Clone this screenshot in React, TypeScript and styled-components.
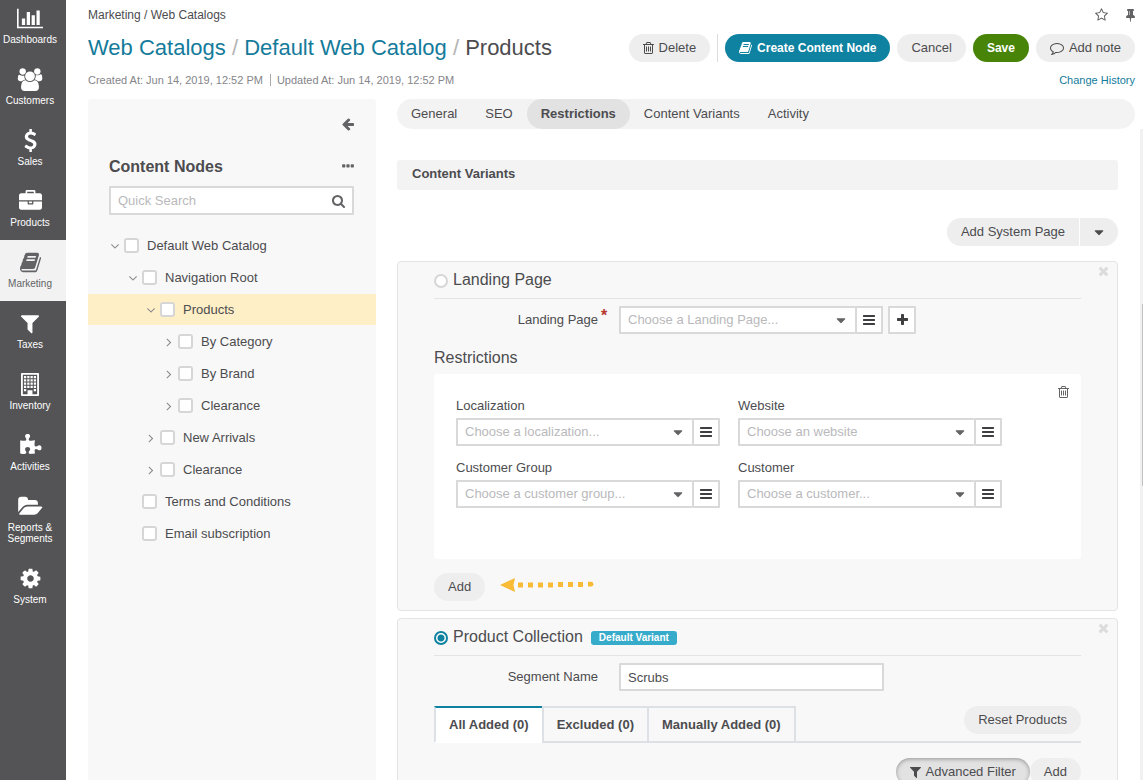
import React from "react";
import styled, { createGlobalStyle, css } from "styled-components";

const GlobalStyle = createGlobalStyle`
  *, *::before, *::after { box-sizing: border-box; }
  body {
    margin: 0;
    background: #fff;
    color: #4c4c4f;
    font-family: "Liberation Sans", Arial, sans-serif;
    font-size: 13px;
    line-height: 18px;
  }
  button, input, select { font: inherit; color: inherit; margin: 0; }
  h1, h2, h3, ul, p { margin: 0; padding: 0; font-weight: normal; }
  ul { list-style: none; }
  a { color: #147b9b; text-decoration: none; }
`;

/* ---------- icons ---------- */

/* w is the glyph's advance width and x its left edge, in 1792-unit ems */
const icons: Record<string, { w: number; x?: number; d: string }> = {
  chart: { w: 2048, d: "M640 896v512h-256v-512h256zm384-512v1024h-256v-1024h256zm1024 1152v128h-2048v-1536h128v1408h1920zm-640-896v768h-256v-768h256zm384-384v1152h-256v-1152h256z" },
  users: { w: 2048, d: "M657 896q-162 5-265 128h-134q-82 0-138-40.5t-56-118.5q0-353 124-353 6 0 43.5 21t97.5 42.5 119 21.5q67 0 133-23-5 37-5 66 0 159 90 290zm1071 637q0 120-73 189.5t-194 69.5h-874q-121 0-194-69.5t-73-189.5q0-53 3.5-103.5t14-109 26.5-108.5 43-97.5 62-81 85.5-53.5 111.5-20q10 0 43 21.5t73 48 107 48 135 21.5 135-21.5 107-48 73-48 43-21.5q61 0 111.5 20t85.5 53.5 62 81 43 97.5 26.5 108.5 14 109 3.5 103.5zm-1024-1277q0 106-75 181t-181 75-181-75-75-181 75-181 181-75 181 75 75 181zm704 384q0 159-112.5 271.5t-271.5 112.5-271.5-112.5-112.5-271.5 112.5-271.5 271.5-112.5 271.5 112.5 112.5 271.5zm576 225q0 78-56 118.5t-138 40.5h-134q-103-123-265-128 90-131 90-290 0-29-5-66 66 23 133 23 59 0 119-21.5t97.5-42.5 43.5-21q124 0 124 353zm-128-609q0 106-75 181t-181 75-181-75-75-181 75-181 181-75 181 75 75 181z" },
  dollar: { w: 1792, d: "M1362 1185q0 153-99.5 263.5t-258.5 136.5v175q0 14-9 23t-23 9h-135q-13 0-22.5-9.5t-9.5-22.5v-175q-66-9-127.5-31t-101.5-44.5-74-48-46.5-37.5-17.5-18q-17-21-2-41l103-135q7-10 23-12 15-2 24 9l2 2q113 99 243 125 37 8 74 8 81 0 142.5-43t61.5-122q0-28-15-53t-33.5-42-58.5-37.5-66-32-80-32.5q-39-16-61.5-25t-61.5-26.5-62.5-31-56.5-35.5-53.5-42.5-43.5-49-35.5-58-21-66.5-8.5-78q0-138 98-242t255-134v-180q0-13 9.5-22.5t22.5-9.5h135q14 0 23 9t9 23v176q57 6 110.5 23t87 33.5 63.5 37.5 39 29 15 14q17 18 5 38l-81 146q-8 15-23 16-14 3-27-7-3-3-14.5-12t-39-26.5-58.5-32-74.5-26-85.5-11.5q-95 0-155 43t-60 111q0 26 8.5 48t29.5 41.5 39.5 33 56 31 60.5 27 70 27.5q53 20 81 31.5t76 35 75.5 42.5 62 50 53 63.5 31.5 76.5 13 94z" },
  briefcase: { w: 1792, d: "M640 256h512v-128h-512v128zm1152 640v480q0 66-47 113t-113 47h-1472q-66 0-113-47t-47-113v-480h672v160q0 26 19 45t45 19h320q26 0 45-19t19-45v-160h672zm-768 0v128h-256v-128h256zm768-480v384h-1792v-384q0-66 47-113t113-47h352v-160q0-40 28-68t68-28h576q40 0 68 28t28 68v160h352q66 0 113 47t47 113z" },
  book: { w: 1664, x: 64, d: "M1703 478q40 57 18 129l-275 906q-19 64-76.5 107.5t-122.5 43.5h-923q-77 0-148.5-53.5t-99.5-131.5q-24-67-2-127 0-4 3-27t4-37q1-8-3-21.5t-3-19.5q2-11 8-21t16.5-23.5 16.5-23.5q23-38 45-91.5t30-91.5q3-10 .5-30t-.5-28q3-11 17-28t17-23q21-36 42-92t25-90q1-9-2.5-32t.5-28q4-13 22-30.5t22-22.5q19-26 42.5-84.5t27.5-96.5q1-8-3-25.5t-2-26.5q2-8 9-18t18-23 17-21q8-12 16.5-30.5t15-35 16-36 19.5-32 26.5-23.5 36-11.5 47.5 5.5l-1 3q38-9 51-9h761q74 0 114 56t18 130l-274 906q-36 119-71.5 153.5t-128.5 34.5h-869q-27 0-38 15-11 16-1 43 24 70 144 70h923q29 0 56-15.5t35-41.5l300-987q7-22 5-57 38 15 59 43zm-1064 2q-4 13 2 22.5t20 9.5h608q13 0 25.5-9.5t16.5-22.5l21-64q4-13-2-22.5t-20-9.5h-608q-13 0-25.5 9.5t-16.5 22.5zm-83 256q-4 13 2 22.5t20 9.5h608q13 0 25.5-9.5t16.5-22.5l21-64q4-13-2-22.5t-20-9.5h-608q-13 0-25.5 9.5t-16.5 22.5z" },
  filter: { w: 1408, x: 192, d: "M1595 295q17 41-14 70l-493 493v742q0 42-39 59-13 5-25 5-27 0-45-19l-256-256q-19-19-19-45v-486l-493-493q-31-29-14-70 17-39 59-39h1280q42 0 59 39z" },
  building: { w: 1408, d: "M64 0h1280q64 0 64 64v1664q0 64-64 64h-1280q-64 0-64-64v-1664q0-64 64-64zM144 128v1536h1120v-1536zM232 232h176v176h-176zM488 232h176v176h-176zM744 232h176v176h-176zM1000 232h176v176h-176zM232 488h176v176h-176zM488 488h176v176h-176zM744 488h176v176h-176zM1000 488h176v176h-176zM232 744h176v176h-176zM488 744h176v176h-176zM744 744h176v176h-176zM1000 744h176v176h-176zM232 1000h176v176h-176zM488 1000h176v176h-176zM744 1000h176v176h-176zM1000 1000h176v176h-176zM232 1256h176v176h-176zM1000 1256h176v176h-176zM512 1344h384v320h-384z" },
  puzzle: { w: 1792, d: "M1755 1083q0 81-44.5 135t-123.5 54q-41 0-77.5-17.5t-59-38-56.5-38-71-17.5q-110 0-110 124 0 39 16 115t15 115v5q-22 0-33 1-34 3-97.5 11.5t-115.5 13.5-98 5q-61 0-103-26.5t-42-83.5q0-37 17.5-71t38-56.5 38-59 17.5-77.5q0-79-54-123.5t-135-44.5q-84 0-143 45.5t-59 127.5q0 43 15 83t33.5 64.5 33.5 53 15 50.5q0 45-46 89-37 35-117 35-95 0-245-24-9-2-27.5-4t-27.5-4l-13-2q-1 0-3-1-2 0-2-1v-1024q2 1 17.5 3.5t34 5 21.5 3.5q150 24 245 24 80 0 117-35 46-44 46-89 0-22-15-50.5t-33.5-53-33.5-64.5-15-83q0-82 59-127.5t144-45.5q80 0 134 44.5t54 123.5q0 41-17.5 77.5t-38 59-38 56.5-17.5 71q0 57 42 83.5t103 26.5q64 0 180-15t163-17v2q-1 2-3.5 17.5t-5 34-3.5 21.5q-24 150-24 245 0 80 35 117 44 46 89 46 22 0 50.5-15t53-33.5 64.5-33.5 83-15q82 0 127.5 59t45.5 143z" },
  folder: { w: 1920, d: "M1879 952q0 31-31 66l-336 396q-43 51-120.5 86.5t-143.5 35.5h-1088q-34 0-60.5-13t-26.5-43q0-31 31-66l336-396q43-51 120.5-86.5t143.5-35.5h1088q34 0 60.5 13t26.5 43zm-343-344v160h-832q-94 0-197 47.5t-164 119.5l-337 396-5 6q0-4-.5-12.5t-.5-12.5v-960q0-92 66-158t158-66h320q92 0 158 66t66 158v32h544q92 0 158 66t66 158z" },
  cog: { w: 1792, d: "M1152 896q0-106-75-181t-181-75-181 75-75 181 75 181 181 75 181-75 75-181zm512-109v222q0 12-8 23t-20 13l-185 28q-19 54-39 91 35 50 107 138 10 12 10 25t-9 23q-27 37-99 108t-94 71q-12 0-26-9l-138-108q-44 23-91 38-16 136-29 186-7 28-36 28h-222q-14 0-24.5-8.5t-11.5-21.5l-28-184q-49-16-90-37l-141 107q-10 9-25 9-14 0-25-11-126-114-165-168-7-10-7-23 0-12 8-23 15-21 51-66.5t54-70.5q-27-50-41-99l-183-27q-13-2-21-12.5t-8-23.5v-222q0-12 8-23t19-13l186-28q14-46 39-92-40-57-107-138-10-12-10-24 0-10 9-23 26-36 98.5-107.5t94.5-71.5q13 0 26 10l138 107q44-23 91-38 16-136 29-186 7-28 36-28h222q14 0 24.5 8.5t11.5 21.5l28 184q49 16 90 37l142-107q9-9 24-9 13 0 25 10 129 119 165 170 7 8 7 22 0 12-8 23-15 21-51 66.5t-54 70.5q26 50 41 98l183 28q13 2 21 12.5t8 23.5z" },
  trash: { w: 1408, x: 192, d: "M704 736v576q0 14-9 23t-23 9h-64q-14 0-23-9t-9-23v-576q0-14 9-23t23-9h64q14 0 23 9t9 23zm256 0v576q0 14-9 23t-23 9h-64q-14 0-23-9t-9-23v-576q0-14 9-23t23-9h64q14 0 23 9t9 23zm256 0v576q0 14-9 23t-23 9h-64q-14 0-23-9t-9-23v-576q0-14 9-23t23-9h64q14 0 23 9t9 23zm128 724v-948h-896v948q0 22 7 40.5t14.5 27 10.5 8.5h832q3 0 10.5-8.5t14.5-27 7-40.5zm-672-1076h448l-48-117q-7-9-17-11h-317q-10 2-17 11zm928 32v64q0 14-9 23t-23 9h-96v948q0 83-47 143.5t-113 60.5h-832q-66 0-113-58.5t-47-141.5v-952h-96q-14 0-23-9t-9-23v-64q0-14 9-23t23-9h309l70-167q15-37 54-63t79-26h320q40 0 79 26t54 63l70 167h309q14 0 23 9t9 23z" },
  star: { w: 1664, x: 64, d: "M1201 1004l306-297-422-62-189-382-189 382-422 62 306 297-73 421 378-199 377 199zm527-357q0 22-26 48l-363 354 86 500q1 7 1 20 0 50-41 50-19 0-40-12l-449-236-449 236q-22 12-40 12-21 0-31.5-14.5t-10.5-35.5q0-6 2-20l86-500-364-354q-25-27-25-48 0-37 56-46l502-73 225-455q19-41 49-41t49 41l225 455 502 73q56 9 56 46z" },
  pin: { w: 1152, x: 320, d: "M800 864v-448q0-14-9-23t-23-9-23 9-9 23v448q0 14 9 23t23 9 23-9 9-23zm672 352q0 26-19 45t-45 19h-429l-51 483q-2 12-10.5 20.5t-20.5 8.5h-1q-27 0-32-27l-76-485h-404q-26 0-45-19t-19-45q0-123 78.5-221.5t177.5-98.5v-512q-52 0-90-38t-38-90 38-90 90-38h640q52 0 90 38t38 90-38 90-90 38v512q99 0 177.5 98.5t78.5 221.5z" },
  comment: { w: 1792, d: "M896 384q-204 0-381.5 69.5t-282 187.5-104.5 255q0 112 71.5 213.5t201.5 175.5l87 50-27 96q-24 91-70 172 152-63 275-171l43-38 57 6q69 8 130 8 204 0 381.5-69.5t282-187.5 104.5-255-104.5-255-282-187.5-381.5-69.5zm896 512q0 174-120 321.5t-326 233-450 85.5q-70 0-145-8-198 175-460 242-49 14-114 22h-5q-15 0-27-10.5t-16-27.5v-1q-3-4-.5-12t2-10 4.5-9.5l6-9 7-8.5 8-9q7-8 31-34.5t34.5-38 31-39.5 32.5-51 27-59 26-76q-157-89-247.5-220t-90.5-281q0-174 120-321.5t326-233 450-85.5 450 85.5 326 233 120 321.5z" },
  arrowLeft: { w: 1536, x: 128, d: "M1664 896v128q0 53-32.5 90.5t-84.5 37.5h-704l293 294q38 36 38 90t-38 90l-75 76q-37 37-90 37-52 0-91-37l-651-652q-37-37-37-90 0-52 37-91l651-650q38-38 91-38 52 0 90 38l75 74q38 38 38 91t-38 91l-293 293h704q52 0 84.5 37.5t32.5 90.5z" },
  search: { w: 1664, x: 64, d: "M1216 832q0-185-131.5-316.5t-316.5-131.5-316.5 131.5-131.5 316.5 131.5 316.5 316.5 131.5 316.5-131.5 131.5-316.5zm512 832q0 52-38 90t-90 38q-54 0-90-38l-343-342q-179 124-399 124-143 0-273.5-55.5t-225-150-150-225-55.5-273.5 55.5-273.5 150-225 225-150 273.5-55.5 273.5 55.5 225 150 150 225 55.5 273.5q0 220-124 399l343 343q37 37 37 90z" },
  close: { w: 1408, x: 192, d: "M1490 1322q0 40-28 68l-136 136q-28 28-68 28t-68-28l-294-294-294 294q-28 28-68 28t-68-28l-136-136q-28-28-28-68t28-68l294-294-294-294q-28-28-28-68t28-68l136-136q28-28 68-28t68 28l294 294 294-294q28-28 68-28t68 28l136 136q28 28 28 68t-28 68l-294 294 294 294q28 28 28 68z" },
  caret: { w: 1152, x: 320, d: "M1408 704q0 26-19 45l-448 448q-19 19-45 19t-45-19l-448-448q-19-19-19-45t19-45 45-19h896q26 0 45 19t19 45z" },
  right: { w: 1792, d: "M1171 960q0 13-10 23l-466 466q-10 10-23 10t-23-10l-50-50q-10-10-10-23t10-23l393-393-393-393q-10-10-10-23t10-23l50-50q10-10 23-10t23 10l466 466q10 10 10 23z" },
  down: { w: 1792, d: "M1395 736q0 13-10 23l-466 466q-10 10-23 10t-23-10l-466-466q-10-10-10-23t10-23l50-50q10-10 23-10t23 10l393 393 393-393q10-10 23-10t23 10l50 50q10 10 10 23z" },
  plus: { w: 1408, x: 192, d: "M1600 736v192q0 40-28 68t-68 28h-416v416q0 40-28 68t-68 28h-192q-40 0-68-28t-28-68v-416h-416q-40 0-68-28t-28-68v-192q0-40 28-68t68-28h416v-416q0-40 28-68t68-28h192q40 0 68 28t28 68v416h416q40 0 68 28t28 68z" },
  bars: { w: 1536, x: 128, d: "M1664 1344v128q0 26-19 45t-45 19h-1408q-26 0-45-19t-19-45v-128q0-26 19-45t45-19h1408q26 0 45 19t19 45zm0-512v128q0 26-19 45t-45 19h-1408q-26 0-45-19t-19-45v-128q0-26 19-45t45-19h1408q26 0 45 19t19 45zm0-512v128q0 26-19 45t-45 19h-1408q-26 0-45-19t-19-45v-128q0-26 19-45t45-19h1408q26 0 45 19t19 45z" },
  dots: { w: 1408, x: 192, d: "M576 736v192q0 40-28 68t-68 28h-192q-40 0-68-28t-28-68v-192q0-40 28-68t68-28h192q40 0 68 28t28 68zm512 0v192q0 40-28 68t-68 28h-192q-40 0-68-28t-28-68v-192q0-40 28-68t68-28h192q40 0 68 28t28 68zm512 0v192q0 40-28 68t-68 28h-192q-40 0-68-28t-28-68v-192q0-40 28-68t68-28h192q40 0 68 28t28 68z" },
};

const Glyph = styled.svg`
  display: block;
  flex: none;
  fill: currentColor;
`;

function Icon({ name, size = 14 }: { name: string; size?: number }) {
  const { w, x = 0, d } = icons[name];
  return (
    <Glyph height={size} width={Math.round((size * w) / 1792)} viewBox={`${x} 0 ${w} 1792`} aria-hidden="true">
      <path d={d} fillRule={name === "building" ? "evenodd" : "nonzero"} />
    </Glyph>
  );
}

/* ---------- shell ---------- */

const Shell = styled.div`
  display: flex;
  height: 100vh;
  overflow: hidden;
`;

const SideNav = styled.nav`
  flex: none;
  width: 66px;
  background: #545456;
  overflow: hidden;
`;

const NavList = styled.ul`
  margin-top: -4px;
`;

const NavLink = styled.a<{ $active?: boolean }>`
  display: flex;
  flex-direction: column;
  align-items: center;
  min-height: 61px;
  padding: 11px 7px 12px 1px;
  gap: 4px;
  font-size: 10px;
  line-height: 11px;
  text-align: center;
  color: ${(p) => (p.$active ? "#636365" : "#fff")};
  background: ${(p) => (p.$active ? "#f2f2f2" : "transparent")};
`;

const Main = styled.main`
  flex: 1;
  min-width: 0;
  display: flex;
  flex-direction: column;
`;

const Header = styled.header`
  padding: 5px 8px 9px 22px;
`;

const HeaderRow = styled.div<{ $height: number; $top?: number }>`
  display: flex;
  align-items: center;
  justify-content: space-between;
  height: ${(p) => p.$height}px;
  margin-top: ${(p) => p.$top || 0}px;
`;

const Crumbs = styled.div`
  font-size: 12px;
  white-space: nowrap;
`;

const HeaderIcons = styled.div`
  display: flex;
  gap: 18px;
`;

const PlainButton = styled.button`
  display: inline-flex;
  align-items: center;
  justify-content: center;
  padding: 0;
  border: 0;
  background: none;
  color: #636365;
  cursor: pointer;
`;

const Title = styled.h1`
  font-size: 22px;
  line-height: 28px;
  white-space: nowrap;
  span { color: #b4b4b4; }
`;

const Actions = styled.div`
  display: flex;
  gap: 7px;
`;

const Divider = styled.span`
  width: 1px;
  background: #ddd;
`;

type Tone = "plain" | "teal" | "green" | "pressed";
const tones = {
  plain: css`background: #eee; color: #4c4c4f;`,
  teal: css`background: #0e82a0; color: #fff; font-size: 12px; font-weight: bold;`,
  green: css`background: #478407; color: #fff; font-size: 12px; font-weight: bold;`,
  pressed: css`background: #e2e2e2; color: #4c4c4f; box-shadow: inset 0 1px 4px rgba(0, 0, 0, 0.35);`,
};

const Button = styled.button<{ $tone?: Tone }>`
  display: inline-flex;
  align-items: center;
  gap: 5px;
  height: 28px;
  padding: 0 14px;
  border: 0;
  border-radius: 14px;
  white-space: nowrap;
  cursor: pointer;
  ${(p) => tones[p.$tone || "plain"]}
`;

const Meta = styled.div`
  display: flex;
  align-items: center;
  font-size: 11px;
  color: #85858a;
  span + span {
    margin-left: 7px;
    padding-left: 6px;
    border-left: 1px solid #aaa;
    line-height: 12px;
  }
`;

const HistoryLink = styled.a`
  font-size: 11px;
`;

const Body = styled.div`
  flex: 1;
  min-height: 0;
  display: flex;
  gap: 21px;
  padding-left: 22px;
`;

/* ---------- tree ---------- */

const TreePanel = styled.aside`
  flex: none;
  width: 288px;
  padding-top: 16px;
  background: #f8f8f8;
  border-radius: 3px 3px 0 0;
`;

const TreeTop = styled.div`
  padding: 0 22px 15px 21px;
`;

const CollapseRow = styled.div`
  display: flex;
  justify-content: flex-end;
  height: 18px;
`;

const TreeHeading = styled.div`
  display: flex;
  align-items: center;
  justify-content: space-between;
  margin: 23px 0 9px;
  h2 {
    font-size: 16px;
    line-height: 21px;
    font-weight: bold;
  }
`;

const fieldBox = css`
  height: 28px;
  border: 2px solid #d9d9d9;
  border-radius: 1px;
  background: #fff;
`;

const SearchBox = styled.label`
  ${fieldBox}
  display: flex;
  align-items: center;
  height: 29px;
  padding: 0 7px;
  color: #636365;
  input {
    flex: 1;
    min-width: 0;
    padding: 0;
    border: 0;
    outline: 0;
    background: none;
  }
  input::placeholder { color: #b9b9bb; opacity: 1; }
`;

const TreeRow = styled.li<{ $level: number; $selected?: boolean }>`
  display: flex;
  align-items: center;
  height: 31px;
  margin-bottom: 1px;
  padding-left: ${(p) => 20 + p.$level * 18}px;
  background: ${(p) => (p.$selected ? "#ffefc6" : "transparent")};
  label {
    display: flex;
    align-items: center;
    gap: 8px;
  }
`;

const Toggle = styled(PlainButton)`
  width: 16px;
  height: 16px;
  padding-right: 2px;
  color: #8a8a8c;
`;

const Check = styled.input.attrs({ type: "checkbox" })`
  appearance: none;
  width: 15px;
  height: 15px;
  border: 2px solid #d6d6d6;
  border-radius: 3px;
  background: #fff;
`;

/* ---------- content ---------- */

const Content = styled.section`
  flex: 1;
  min-width: 0;
  display: flex;
  flex-direction: column;
`;

const Tabs = styled.div`
  display: flex;
  flex: none;
  height: 30px;
  margin-right: 8px;
  border-radius: 15px;
  background: #f3f3f3;
`;

const Tab = styled.button<{ $active?: boolean }>`
  padding: 0 14px;
  border: 0;
  border-radius: 15px;
  background: ${(p) => (p.$active ? "#e2e2e2" : "transparent")};
  font-weight: ${(p) => (p.$active ? "bold" : "normal")};
  cursor: pointer;
`;

const ScrollArea = styled.div`
  flex: 1;
  min-height: 0;
  display: flex;
`;

const ScrollBody = styled.div`
  flex: 1;
  min-width: 0;
  overflow: hidden;
  padding: 31px 22px 0 0;
`;

const ScrollTrack = styled.div`
  flex: none;
  width: 3px;
  padding: 175px 0 0 2px;
  background: #f1f1f1;
`;

const ScrollThumb = styled.div`
  height: 182px;
  background: #c1c1c1;
`;

const SectionTitle = styled.h2`
  height: 30px;
  padding: 0 15px;
  border-radius: 3px;
  background: #f3f3f3;
  font-size: 13px;
  font-weight: bold;
  line-height: 28px;
`;

const SplitRow = styled.div`
  display: flex;
  justify-content: flex-end;
  gap: 1px;
  margin: 28px 0 15px;
`;

const SplitMain = styled(Button)`
  border-radius: 14px 0 0 14px;
`;

const SplitToggle = styled(Button)`
  border-radius: 0 14px 14px 0;
`;

const Card = styled.article`
  position: relative;
  margin-bottom: 7px;
  padding: 0 36px 9px;
  border: 1px solid #e4e4e4;
  border-radius: 4px;
  background: #f8f8f8;
`;

const CardClose = styled(PlainButton)`
  position: absolute;
  top: 2px;
  right: 8px;
  color: #dcdcdc;
`;

const CardTitle = styled.label`
  display: flex;
  align-items: center;
  height: 37px;
  border-bottom: 1px solid #e4e4e4;
  font-size: 16px;
`;

const Radio = styled.input.attrs({ type: "radio", name: "variant" })`
  appearance: none;
  width: 14px;
  height: 14px;
  margin: 2px 5px 0 0;
  border: 2px solid #d6d6d6;
  border-radius: 50%;
  background: #fff;
  &:checked {
    border-color: #0e82a0;
    background: radial-gradient(circle, #0e82a0 3px, #fff 4px);
  }
`;

const Badge = styled.span`
  margin: 2px 0 0 8px;
  padding: 0 8px;
  border-radius: 3px;
  background: #37abca;
  color: #fff;
  font-size: 10px;
  font-weight: bold;
  line-height: 14px;
`;

const FormRow = styled.div`
  display: flex;
  align-items: center;
  padding-top: 7px;
  gap: 5px;
`;

const RowLabel = styled.label<{ $required?: boolean }>`
  position: relative;
  width: 164px;
  margin-right: 16px;
  text-align: right;
  ${(p) =>
    p.$required &&
    css`
      &::after {
        content: "*";
        position: absolute;
        left: calc(100% + 3px);
        top: -4px;
        font-size: 16px;
        font-weight: bold;
        color: #b5372f;
      }
    `}
`;

const Combo = styled.div`
  display: flex;
  width: 264px;
`;

const SelectWrap = styled.div`
  ${fieldBox}
  display: flex;
  align-items: center;
  flex: 1;
  min-width: 0;
  border-right-width: 0;
  color: #636365;
  select {
    appearance: none;
    flex: 1;
    min-width: 0;
    height: 24px;
    margin-right: -24px;
    padding: 0 24px 0 7px;
    border: 0;
    outline: 0;
    background: none;
    color: #b9b9bb;
  }
  svg { margin-right: 9px; pointer-events: none; }
`;

const SquareButton = styled.button`
  ${fieldBox}
  display: flex;
  align-items: center;
  justify-content: center;
  flex: none;
  width: 28px;
  padding: 0;
  color: #3f3f41;
  cursor: pointer;
`;

const TextInput = styled.input`
  ${fieldBox}
  width: 265px;
  padding: 0 7px;
`;

const SubHeading = styled.h3`
  margin: 14px 0 6px;
  font-size: 16px;
  line-height: 20px;
`;

const RestrictionBox = styled.div`
  display: flex;
  justify-content: space-between;
  align-items: flex-start;
  min-height: 185px;
  padding: 11px 12px 22px 22px;
  border-radius: 3px;
  background: #fff;
`;

const FieldGrid = styled.div`
  display: grid;
  grid-template-columns: repeat(2, 264px);
  gap: 13px 18px;
  padding-top: 12px;
`;

const Field = styled.div`
  label {
    display: block;
    height: 21px;
  }
`;

const AddRow = styled.div`
  display: flex;
  align-items: center;
  gap: 15px;
  padding-top: 14px;
`;

const GridTabs = styled.div`
  display: flex;
  align-items: flex-start;
  justify-content: space-between;
  margin: 15px 0;
  border-bottom: 2px solid #dde1e6;
`;

const GridTabList = styled.div`
  display: flex;
  margin-bottom: -2px;
`;

const GridTab = styled.button<{ $active?: boolean }>`
  height: 37px;
  margin-right: -2px;
  padding: 0 13px;
  border: 2px solid #dde1e6;
  background: #f8f8f8;
  font-weight: bold;
  white-space: nowrap;
  cursor: pointer;
  ${(p) =>
    p.$active &&
    css`
      border-top-color: #0e82a0;
      border-bottom-color: #fff;
      background: #fff;
    `}
`;

const Toolbar = styled.div`
  display: flex;
  justify-content: flex-end;
`;

/* ---------- data ---------- */

const navItems = [
  ["chart", "Dashboards"],
  ["users", "Customers"],
  ["dollar", "Sales"],
  ["briefcase", "Products"],
  ["book", "Marketing"],
  ["filter", "Taxes"],
  ["building", "Inventory"],
  ["puzzle", "Activities"],
  ["folder", "Reports & Segments"],
  ["cog", "System"],
];

const nodes: { label: string; level: number; arrow?: "down" | "right" }[] = [
  { label: "Default Web Catalog", level: 0, arrow: "down" },
  { label: "Navigation Root", level: 1, arrow: "down" },
  { label: "Products", level: 2, arrow: "down" },
  { label: "By Category", level: 3, arrow: "right" },
  { label: "By Brand", level: 3, arrow: "right" },
  { label: "Clearance", level: 3, arrow: "right" },
  { label: "New Arrivals", level: 2, arrow: "right" },
  { label: "Clearance", level: 2, arrow: "right" },
  { label: "Terms and Conditions", level: 1 },
  { label: "Email subscription", level: 1 },
];

const restrictionFields = [
  ["localization", "Localization", "Choose a localization..."],
  ["website", "Website", "Choose an website"],
  ["customer-group", "Customer Group", "Choose a customer group..."],
  ["customer", "Customer", "Choose a customer..."],
];

const TogglePlaceholder = styled.span`
  width: 16px;
`;

function ComboField({ id, placeholder }: { id: string; placeholder: string }) {
  return (
    <Combo>
      <SelectWrap>
        <select id={id}>
          <option>{placeholder}</option>
        </select>
        <Icon name="caret" size={15} />
      </SelectWrap>
      <SquareButton type="button" aria-label="Browse list">
        <Icon name="bars" />
      </SquareButton>
    </Combo>
  );
}

function DottedArrow() {
  return (
    <Glyph width="96" height="20" viewBox="0 0 96 20" aria-hidden="true" color="#f9ba36">
      <path d="M0 8L15 1L13.500 8L15 15Z" />
      {[18, 28, 38, 48, 58, 68, 78].map((x, i) => (
        <rect key={x} x={x} y={i < 4 ? 5.500 : 5} width="5" height="5" />
      ))}
      <path d="M88 4.800h3a2.400 2.400 0 0 1 0 4.800h-3z" />
    </Glyph>
  );
}

export default function App() {
  return (
    <>
      <GlobalStyle />
      <Shell>
        <SideNav aria-label="Main">
          <NavList>
            {navItems.map(([icon, label]) => (
              <li key={label}>
                <NavLink href="#" $active={label === "Marketing"}>
                  <Icon name={icon} size={23} />
                  {label}
                </NavLink>
              </li>
            ))}
          </NavList>
        </SideNav>

        <Main>
          <Header>
            <HeaderRow $height={20}>
              <Crumbs>Marketing / Web Catalogs</Crumbs>
              <HeaderIcons>
                <PlainButton type="button" aria-label="Add to favorites">
                  <Icon name="star" />
                </PlainButton>
                <PlainButton type="button" aria-label="Pin page">
                  <Icon name="pin" />
                </PlainButton>
              </HeaderIcons>
            </HeaderRow>
            <HeaderRow $height={28} $top={9}>
              <Title>
                <a href="#">Web Catalogs</a> <span>/</span> <a href="#">Default Web Catalog</a> <span>/</span> Products
              </Title>
              <Actions>
                <Button type="button">
                  <Icon name="trash" /> Delete
                </Button>
                <Divider />
                <Button type="button" $tone="teal">
                  <Icon name="book" /> Create Content Node
                </Button>
                <Button type="button">Cancel</Button>
                <Button type="button" $tone="green">Save</Button>
                <Button type="button">
                  <Icon name="comment" /> Add note
                </Button>
              </Actions>
            </HeaderRow>
            <HeaderRow $height={20} $top={8}>
              <Meta>
                <span>Created At: Jun 14, 2019, 12:52 PM</span>
                <span>Updated At: Jun 14, 2019, 12:52 PM</span>
              </Meta>
              <HistoryLink href="#">Change History</HistoryLink>
            </HeaderRow>
          </Header>

          <Body>
            <TreePanel>
              <TreeTop>
                <CollapseRow>
                  <PlainButton type="button" aria-label="Collapse panel">
                    <Icon name="arrowLeft" />
                  </PlainButton>
                </CollapseRow>
                <TreeHeading>
                  <h2>Content Nodes</h2>
                  <PlainButton type="button" aria-label="More options">
                    <Icon name="dots" size={15} />
                  </PlainButton>
                </TreeHeading>
                <SearchBox>
                  <input type="text" placeholder="Quick Search" aria-label="Quick Search" />
                  <Icon name="search" />
                </SearchBox>
              </TreeTop>
              <ul>
                {nodes.map((n, i) => (
                  <TreeRow key={i} $level={n.level} $selected={i === 2}>
                    {n.arrow ? (
                      <Toggle type="button" aria-label={`Toggle ${n.label}`}>
                        <Icon name={n.arrow} />
                      </Toggle>
                    ) : (
                      <TogglePlaceholder />
                    )}
                    <label>
                      <Check />
                      {n.label}
                    </label>
                  </TreeRow>
                ))}
              </ul>
            </TreePanel>

            <Content>
              <Tabs role="tablist">
                {["General", "SEO", "Restrictions", "Content Variants", "Activity"].map((t) => (
                  <Tab key={t} type="button" role="tab" aria-selected={t === "Restrictions"} $active={t === "Restrictions"}>
                    {t}
                  </Tab>
                ))}
              </Tabs>
              <ScrollArea>
                <ScrollBody>
                  <SectionTitle>Content Variants</SectionTitle>
                  <SplitRow>
                    <SplitMain type="button">Add System Page</SplitMain>
                    <SplitToggle type="button" aria-label="More page types">
                      <Icon name="caret" size={15} />
                    </SplitToggle>
                  </SplitRow>

                  <Card>
                    <CardClose type="button" aria-label="Remove landing page">
                      <Icon name="close" />
                    </CardClose>
                    <CardTitle>
                      <Radio />
                      Landing Page
                    </CardTitle>
                    <FormRow>
                      <RowLabel htmlFor="landing-page" $required>Landing Page</RowLabel>
                      <ComboField id="landing-page" placeholder="Choose a Landing Page..." />
                      <SquareButton type="button" aria-label="Create landing page">
                        <Icon name="plus" />
                      </SquareButton>
                    </FormRow>
                    <SubHeading>Restrictions</SubHeading>
                    <RestrictionBox>
                      <FieldGrid>
                        {restrictionFields.map(([id, label, placeholder]) => (
                          <Field key={id}>
                            <label htmlFor={id}>{label}</label>
                            <ComboField id={id} placeholder={placeholder} />
                          </Field>
                        ))}
                      </FieldGrid>
                      <PlainButton type="button" aria-label="Delete restriction">
                        <Icon name="trash" />
                      </PlainButton>
                    </RestrictionBox>
                    <AddRow>
                      <Button type="button">Add</Button>
                      <DottedArrow />
                    </AddRow>
                  </Card>

                  <Card>
                    <CardClose type="button" aria-label="Remove product collection">
                      <Icon name="close" />
                    </CardClose>
                    <CardTitle>
                      <Radio defaultChecked />
                      Product Collection
                      <Badge>Default Variant</Badge>
                    </CardTitle>
                    <FormRow>
                      <RowLabel htmlFor="segment-name">Segment Name</RowLabel>
                      <TextInput id="segment-name" type="text" defaultValue="Scrubs" />
                    </FormRow>
                    <GridTabs>
                      <GridTabList role="tablist">
                        <GridTab type="button" role="tab" aria-selected="true" $active>All Added (0)</GridTab>
                        <GridTab type="button" role="tab">Excluded (0)</GridTab>
                        <GridTab type="button" role="tab">Manually Added (0)</GridTab>
                      </GridTabList>
                      <Button type="button">Reset Products</Button>
                    </GridTabs>
                    <Toolbar>
                      <Button type="button" $tone="pressed">
                        <Icon name="filter" /> Advanced Filter
                      </Button>
                      <Button type="button">Add</Button>
                    </Toolbar>
                  </Card>
                </ScrollBody>
                <ScrollTrack aria-hidden="true">
                  <ScrollThumb />
                </ScrollTrack>
              </ScrollArea>
            </Content>
          </Body>
        </Main>
      </Shell>
    </>
  );
}
